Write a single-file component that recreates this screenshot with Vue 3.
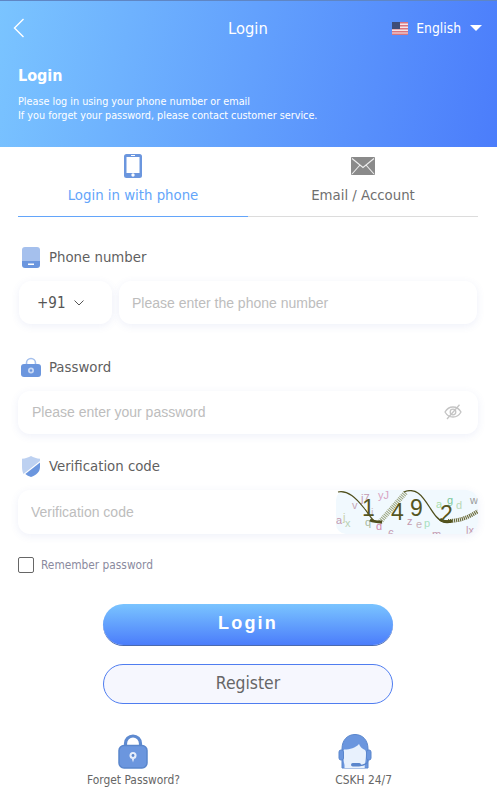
<template>
  <div class="page">
    <header class="hero">
      <div class="nav">
        <svg class="back" width="12" height="20" viewBox="0 0 12 20"><path d="M10.500 1 1.500 10l9 9" fill="none" stroke="#fff" stroke-width="1.400" /></svg>
        <span class="nav-title">Login</span>
        <div class="lang">
          <svg width="16" height="13" viewBox="0 0 16 13">
            <rect width="16" height="13" fill="#f3e6ea" />
            <rect v-for="y in [0, 3, 6, 9, 11.500]" :key="y" :y="y" width="16" height="1.500" fill="#d9757e" />
            <rect width="8" height="7" fill="#3f4c78" />
          </svg>
          <span>English</span>
          <i class="caret"></i>
        </div>
      </div>
      <h1>Login</h1>
      <p>Please log in using your phone number or email<br />If you forget your password, please contact customer service.</p>
    </header>

    <div class="tabs">
      <div class="tab active">
        <svg width="18" height="24" viewBox="0 0 18 24">
          <rect width="18" height="24" rx="2.500" fill="#6b96de" />
          <rect x="2.500" y="3" width="13" height="16" fill="#fff" />
          <rect x="7" y="1" width="4" height="1" fill="#fff" />
          <circle cx="9" cy="21" r="1.700" fill="#fff" />
        </svg>
        <span>Login in with phone</span>
      </div>
      <div class="tab">
        <svg width="24" height="18" viewBox="0 0 24 18">
          <rect width="24" height="18" rx="1" fill="#8a8a8a" />
          <path d="M1 1.500 12 10.500 23 1.500M1 17 9 8M23 17 15 8" fill="none" stroke="#eee" stroke-width="1.100" />
        </svg>
        <span>Email / Account</span>
      </div>
    </div>

    <form class="form" @submit.prevent>
      <label class="label phone-label">
        <svg width="18" height="21" viewBox="0 0 18 21">
          <path d="M3 0h12a3 3 0 0 1 3 3v11H0V3a3 3 0 0 1 3-3z" fill="#a5c0ed" />
          <path d="M0 14h18v4a3 3 0 0 1-3 3H3a3 3 0 0 1-3-3z" fill="#6b96de" />
          <rect x="6" y="16.500" width="6" height="1.500" fill="#fff" />
        </svg>
        <span>Phone number</span>
      </label>
      <div class="phone-row">
        <div class="box code">
          <span>+91</span>
          <svg width="10" height="6" viewBox="0 0 10 6"><path d="M.5.5 5 5 9.500.5" fill="none" stroke="#555" stroke-width="1" /></svg>
        </div>
        <div class="box grow"><input type="text" placeholder="Please enter the phone number" /></div>
      </div>

      <label class="label pass-label">
        <svg width="20" height="20" viewBox="0 0 20 20">
          <path d="M5.500 9V6a4.500 4.500 0 0 1 9 0v3" fill="none" stroke="#a5c0ed" stroke-width="1.600" />
          <rect y="7" width="20" height="13" rx="3" fill="#6b96de" />
          <circle cx="10" cy="13.500" r="3" fill="#c9d9f5" />
          <circle cx="10" cy="13.500" r="1.200" fill="#6b96de" />
        </svg>
        <span>Password</span>
      </label>
      <div class="box pass">
        <input type="password" placeholder="Please enter your password" />
        <svg width="18" height="16" viewBox="0 0 18 16">
          <path d="M1 8c2-3.500 4.800-5 8-5s6 1.500 8 5c-2 3.500-4.800 5-8 5s-6-1.500-8-5z" fill="none" stroke="#c4c4c4" stroke-width="1.300" />
          <circle cx="9" cy="8" r="2.800" fill="none" stroke="#c4c4c4" stroke-width="1.300" />
          <path d="M15.500.8 3 15" fill="none" stroke="#c4c4c4" stroke-width="1.300" />
        </svg>
      </div>

      <label class="label code-label">
        <svg width="18" height="21" viewBox="0 0 18 21">
          <path d="M9 0c2.500 1.600 5.500 2.500 9 2.700V5L1.500 18C.5 16 0 13.500 0 11V2.700C3.500 2.500 6.500 1.600 9 0z" fill="#bdd1f1" />
          <path d="M18 6.500V11c0 4.500-3.500 8.300-9 10-2.300-.7-4.200-1.700-5.700-3z" fill="#6b96de" />
        </svg>
        <span>Verification code</span>
      </label>
      <div class="box captcha-box">
        <input type="text" placeholder="Verification code" />
        <svg class="captcha" width="142" height="44" viewBox="0 0 142 44">
          <rect width="142" height="44" rx="10" fill="#f1f9fe" />
          <g class="noise">
            <text x="16" y="19" fill="#c6a7b5">v</text>
            <text x="25" y="12" fill="#c49ab0">j7</text>
            <text x="42" y="9" fill="#d9a3c2">yJ</text>
            <text x="7" y="31" fill="#c7cfa8">j</text>
            <text x="0" y="34" fill="#c49ab0">a</text>
            <text x="9" y="37" fill="#b9d2b5">x</text>
            <text x="35" y="26" fill="#c8b8c0">i</text>
            <text x="29" y="36" fill="#a8b89c">q</text>
            <text x="40" y="40" fill="#cf88ab">d</text>
            <text x="52" y="48" fill="#c49ab0">6</text>
            <text x="71" y="35" fill="#c49ab0">z</text>
            <text x="80" y="38" fill="#c8b0b8">e</text>
            <text x="88" y="37" fill="#a8e0c0">p</text>
            <text x="100" y="18" fill="#a8dca8">a</text>
            <text x="111" y="14" fill="#7ac79a">g</text>
            <text x="120" y="19" fill="#b9d8b5">d</text>
            <text x="134" y="14" fill="#9a9a9a">w</text>
            <text x="130" y="44" fill="#c49ab0">lx</text>
            <text x="96" y="48" fill="#c49ab0">m</text>
          </g>
          <path d="M44 32 70 2" fill="none" stroke="#9aa37c" stroke-width="5" stroke-dasharray="1 1" />
          <path d="M112 31c10 0 20-3 30-10" fill="none" stroke="#6b6b3a" stroke-width="4" stroke-dasharray="1.200 .8" />
          <path d="M2 2C12 0 20 8 28 18s8 14 16 14" fill="none" stroke="#4f4f1c" stroke-width="1.200" />
          <path d="M34 30c4 2 8 2 12 2" fill="none" stroke="#4f4f1c" stroke-width="3" />
          <path d="M68 2c4-2 10-2 14 1 10 7 16 27 26 29 3 .6 6 0 8-1" fill="none" stroke="#4f4f1c" stroke-width="1.300" />
          <path d="M104 29c3 3 8 3 12 2" fill="none" stroke="#4f4f1c" stroke-width="3" />
          <g class="digits" fill="#55551f">
            <text x="26" y="26">1</text>
            <text x="55" y="30">4</text>
            <text x="74" y="26">9</text>
            <text x="104" y="32">2</text>
          </g>
        </svg>
      </div>

      <label class="remember">
        <span class="check"></span>
        <span>Remember password</span>
      </label>

      <button class="btn primary" type="submit">Login</button>
      <button class="btn secondary" type="button">Register</button>
    </form>

    <footer class="links">
      <a class="link forget">
        <svg width="30" height="35" viewBox="0 0 30 35">
          <path d="M7.500 14V9.500a7.500 7.500 0 0 1 15 0V14" fill="none" stroke="#5e8ad0" stroke-width="3.200" />
          <rect x="1" y="11.500" width="28" height="22.500" rx="5" fill="#6b96de" stroke="#5a86cc" stroke-width="1.500" />
          <circle cx="15" cy="21.500" r="3.500" fill="#e6eefb" />
          <circle cx="15" cy="21.500" r="1.400" fill="#5a86cc" />
          <path d="M13.800 24.500h2.400l-1.200 4z" fill="#e6eefb" />
        </svg>
        <span>Forget Password?</span>
      </a>
      <a class="link support">
        <svg width="34" height="35" viewBox="0 0 34 35">
          <path d="M4 34V15C4 6 9.500 .5 17 .5S30 6 30 15v19z" fill="#6b96de" stroke="#5a86cc" />
          <path d="M6.500 34v-3c-.8-3-1.300-7-1.300-12 0-1.500.3-2.500 1-3.500 6 0 11-1.500 14.800-5.500 1 3 3.500 5 6 6 .8 1 1 2 1 3 0 5-.5 9-1.300 12v3z" fill="#e8f1fd" />
          <rect x="1" y="16" width="4.500" height="10" rx="2" fill="#6b96de" stroke="#5a86cc" />
          <rect x="28.500" y="16" width="4.500" height="10" rx="2" fill="#6b96de" stroke="#5a86cc" />
          <path d="M30 26c0 3-3 5-8 5.500" fill="none" stroke="#5a86cc" stroke-width="1.300" />
          <rect x="13" y="29" width="10" height="3.500" rx="1.700" fill="#5a86cc" />
        </svg>
        <span>CSKH 24/7</span>
      </a>
    </footer>
  </div>
</template>

<script setup>
</script>

<style>
html,
body {
  margin: 0;
  background: #fff;
}
</style>

<style scoped>
.page {
  width: 497px;
  height: 792px;
  overflow: hidden;
  background: #fff;
  font-family: "DejaVu Sans Condensed", "DejaVu Sans", sans-serif;
  color: #666;
}

.hero {
  box-sizing: border-box;
  height: 147px;
  padding: 1px 18px 0;
  border-top: 1px solid #5f86c4;
  background: linear-gradient(100deg, #7ac4ff, #4b7dfb);
  color: #fff;
}

.nav {
  display: flex;
  align-items: center;
  justify-content: space-between;
  height: 52px;
  position: relative;
}

.back {
  margin-left: -5px;
}

.nav-title {
  position: absolute;
  left: 210px;
  font-size: 16.400px;
}

.lang {
  display: flex;
  align-items: center;
  font-size: 13.800px;
  margin-right: -3px;
}

.lang span {
  margin-left: 8px;
}

.caret {
  margin-left: 9px;
  border-left: 6.500px solid transparent;
  border-right: 6.500px solid transparent;
  border-top: 6px solid #fff;
}

h1 {
  margin: 12px 0 0;
  font-size: 16px;
  line-height: 20px;
  font-weight: 700;
}

.hero p {
  margin: 9px 0 0;
  font-size: 10.750px;
  line-height: 14px;
}

.tabs {
  display: flex;
  margin: 0 19px 0 18px;
}

.tab {
  flex: 1;
  height: 70px;
  box-sizing: border-box;
  padding-top: 7px;
  display: flex;
  flex-direction: column;
  align-items: center;
  border-bottom: 1px solid #dcdcdc;
  font-size: 14.800px;
  color: #6f6f6f;
}

.tab svg {
  height: 24px;
}

.tab span {
  margin-top: 5px;
  line-height: 24px;
}

.tab.active {
  color: #63a5fa;
  border-bottom-color: #63a5fa;
}

.form {
  padding: 0 19px 0 18px;
  display: flex;
  flex-direction: column;
}

.label {
  display: flex;
  align-items: center;
  gap: 9px;
  font-size: 14.800px;
  color: #5f5f5f;
  padding-left: 4px;
}

.label span {
  padding-bottom: 2px;
}

.phone-label {
  margin-top: 29px;
  height: 22px;
}

.pass-label {
  margin-top: 32px;
  height: 22px;
  padding-left: 3px;
  gap: 8px;
}

.code-label {
  margin-top: 21px;
  height: 22px;
}

.box {
  display: flex;
  align-items: center;
  box-sizing: border-box;
  height: 43px;
  border-radius: 12px;
  background: #fff;
  box-shadow: 0 2px 8px rgba(70, 90, 190, 0.09);
}

.phone-row {
  display: flex;
  gap: 7px;
  margin-top: 13px;
}

.code {
  width: 93px;
  margin-left: 1px;
  padding-left: 18px;
  font-size: 15px;
  color: #555;
  gap: 9px;
}

.grow {
  flex: 1;
  padding-left: 13px;
  margin-right: 1px;
}

input {
  flex: 1;
  min-width: 0;
  border: 0;
  outline: 0;
  padding: 0;
  background: transparent;
  font-family: "Liberation Sans", Arial, sans-serif;
  font-size: 14px;
}

input::placeholder {
  color: #bdbdbd;
}

.pass {
  margin-top: 13px;
  padding: 0 16px 1px 14px;
}

.captcha-box {
  margin-top: 13px;
  height: 44px;
  padding-left: 13px;
  overflow: hidden;
}

.captcha {
  flex: none;
  display: block;
}

.noise text {
  font-family: "Liberation Sans", sans-serif;
  font-size: 11px;
}

.digits text {
  font-family: "Liberation Sans", sans-serif;
  font-size: 23px;
}

.remember {
  display: flex;
  align-items: center;
  gap: 7px;
  margin-top: 23px;
  font-size: 11.800px;
  color: #8a8a9e;
}

.check {
  width: 16px;
  height: 16px;
  box-sizing: border-box;
  border: 1px solid #666;
  border-radius: 2px;
}

.btn {
  align-self: center;
  width: 290px;
  border-radius: 21px;
  padding: 0;
}

.primary {
  margin-top: 31px;
  height: 41px;
  border: 0;
  padding-bottom: 3px;
  box-shadow: 0 1px 0 #4a6aae;
  background: linear-gradient(180deg, #7ac4ff, #4b7dfb);
  color: #fff;
  font-family: "Liberation Sans", Arial, sans-serif;
  font-weight: 700;
  font-size: 18px;
  letter-spacing: 2.200px;
}

.secondary {
  margin-top: 19px;
  height: 40px;
  border: 1px solid #4f7df0;
  padding-bottom: 2px;
  background: #f6f7fe;
  color: #666;
  font-family: inherit;
  font-size: 17.400px;
}

.links {
  display: flex;
  justify-content: space-between;
  padding: 30px 0 0;
  width: 305px;
  margin-left: 87px;
}

.link {
  display: flex;
  flex-direction: column;
  align-items: center;
  font-size: 11.900px;
  color: #666;
}

.link span {
  margin-top: 3px;
  line-height: 16px;
}

.forget svg {
  margin-right: 2px;
}

.support {
  align-items: flex-start;
}

.support svg {
  margin-left: 3px;
}
</style>
